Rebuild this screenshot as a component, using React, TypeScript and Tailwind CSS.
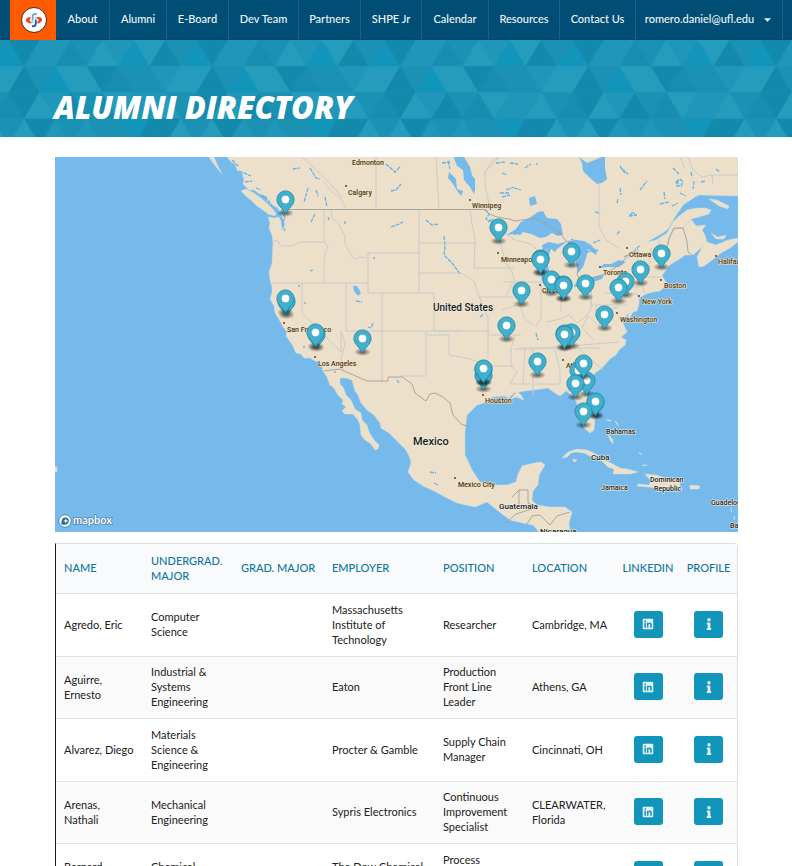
import { FaCaretDown, FaInfo, FaLinkedin } from "react-icons/fa";

const NAV = [
  { label: "About", width: "w-[54px]" },
  { label: "Alumni", width: "w-[57px]" },
  { label: "E-Board", width: "w-[62px]" },
  { label: "Dev Team", width: "w-[70px]" },
  { label: "Partners", width: "w-[62px]" },
  { label: "SHPE Jr", width: "w-[61px]" },
  { label: "Calendar", width: "w-[67px]" },
  { label: "Resources", width: "w-[71px]" },
  { label: "Contact Us", width: "w-[76px]" },
];

const SHADES: Record<string, string> = {
  B: "#1295bb",
  D: "#1389ab",
  K: "#188db0",
  M: "#1b91b4",
  m: "#2096b8",
  L: "#269cbd",
};

/* Each row holds one 188px period, left to right; the first triangle is centred on x = 0. */
const TRIANGLE_ROWS = [
  { first: "up", tones: "BDmmKMLmBLDM" },
  { first: "down", tones: "LDMBLLDKMMmL" },
  { first: "up", tones: "KDLmDMKLmmLM" },
  { first: "down", tones: "MLDmMmMMBDDL" },
];

function TrianglePattern() {
  return (
    <svg className="absolute inset-0 h-full w-full" aria-hidden="true">
      <defs>
        <pattern id="triangles" x="8.5" y="0" width="188" height="104.8" patternUnits="userSpaceOnUse">
          <rect width="188" height="104.8" fill="#1b91b4" />
          {TRIANGLE_ROWS.map((row, r) =>
            [...row.tones, row.tones[0]].map((tone, i) => {
              const cx = i * 15.667;
              const up = (i % 2 === 0) === (row.first === "up");
              const apex = up ? r * 26.2 : (r + 1) * 26.2;
              const base = up ? (r + 1) * 26.2 : r * 26.2;
              return (
                <polygon
                  key={`${r}-${i}`}
                  points={`${cx},${apex} ${cx - 15.667},${base} ${cx + 15.667},${base}`}
                  fill={SHADES[tone]}
                />
              );
            })
          )}
        </pattern>
      </defs>
      <rect width="100%" height="100%" fill="url(#triangles)" />
    </svg>
  );
}

function ShpeLogo() {
  return (
    <svg viewBox="0 0 26 26" className="size-[26px]" aria-hidden="true">
      <circle cx="13" cy="13" r="12.5" fill="#fff" stroke="#3b2a2a" strokeWidth="1" />
      <path d="M9.500 10C6 10.500 4.300 12.300 5 14C5.700 15.600 8 16.500 10.500 16.500L10.500 15C8.500 14.500 8 12.500 9.500 11.800Z" fill="#e8452c" />
      <path d="M16.500 9.700C20 10 21.700 11.500 21 13.300C20.300 15.300 18.500 16.300 16.300 16.500V14.800C18.300 14 18.300 12 15.500 11.500Z" fill="#e8452c" />
      <path d="M15.800 6.300C12.500 5.500 10.700 7 10.700 9.500V13.500H12.600V9.800C12.600 8.300 13.800 7.800 15.800 8.300Z" fill="#74a9c9" />
      <path d="M15.800 12.500V16.500C15.800 19.300 14 20.800 11 20V18.200C12.800 18.600 13.900 17.700 13.900 16.300V12.500Z" fill="#1769a0" />
      <path d="M13.900 12.500V10H15.800V12.500ZM10.700 13.500H12.600V16H10.700Z" fill="#b9cfdb" />
    </svg>
  );
}

const MAINLAND =
  "M227 157L231 162L235 164L237 170L242 173L244 180L243 184L249 190L254 190L258 193L264 196L267 201L272 205L278 208L280 212L283 219L285 224L282 230L281 221L279 217L274 218L268 217L270 223L269 228L272 235L273 243L272 263L269 272L270 280L272 287L272 293L270 299L274 306L275 313L280 321L283 327L287 332L286 336L293 346L296 353L301 354L304 358L310 358L315 361L319 362L322 367L323 371L327 377L330 385L334 388L338 395L343 400L342 404L346 407L342 411L345 414L353 414L358 420L360 425L361 435L365 440L371 444L375 450L378 449L379 445L374 440L369 432L367 425L362 420L361 413L355 409L351 400L346 395L343 387L340 384L340 378L346 378L352 380L355 391L358 395L361 403L367 410L374 415L380 423L381 428L389 433L397 441L406 450L410 458L411 463L408 472L414 480L423 486L434 491L445 497L457 503L475 507L482 504L487 502L497 510L510 520L523 523L533 525L539 532H570L569 523L572 512L565 507L550 507L537 505L532 500L533 491L536 487L538 485L539 475L545 465L541 462L534 463L522 466L518 474L516 482L507 485L493 485L480 482L472 470L467 459L465 455L465 431L467 415L477 405L484 403L493 397L504 396L511 399L516 397L524 400L521 395L518 392L526 391L533 390L541 389L548 388L555 393L560 396L566 391L572 395L577 403L577 412L580 421L585 429L590 433L594 430L595 417L591 407L588 400L587 385L593 375L602 368L610 359L616 355L619 350L625 345L626 340L621 337L627 332L623 323L628 313L629 319L633 312L637 311L639 304L639 298L646 294L653 292L660 291L666 286L666 282L662 276L665 271L671 264L678 260L685 255L693 255L700 249L703 246L697 257L699 267L704 266L711 261L721 253L730 248L738 242V238L728 240L716 245L707 242L705 235L702 230L706 225L696 226L691 219L699 217L709 214L711 210L705 208L697 208L687 210L679 216L673 222L667 233L656 240L647 242L663 233L668 229L675 217L683 205L695 197L699 195L738 196V157Z";

const LAKES = [
  "M508 234L516 229L521 222L531 217L538 212L543 211L547 218L557 219L561 224L563 235L558 236L552 233L546 237L540 238L531 234L523 232L520 235L514 234L506 235Z",
  "M541 275L540 263L542 254L547 249L549 247L543 252L542 245L549 242L558 244L568 241L561 246L557 249L555 252L551 249L547 260L549 270L547 278L542 281Z",
  "M567 241L577 240L584 241L591 245L597 251L596 255L588 249L586 258L583 267L578 273L576 264L574 252L570 248Z",
  "M575 284L582 279L593 277L604 275L602 279L590 283L580 287L574 287Z",
  "M599 268L604 264L611 264L619 260L626 262L619 267L608 267Z",
  "M579 157L587 163L602 157H605V168L607 179L602 183L597 184L588 176L583 171L582 163Z",
  "M454 157H464L470 167L472 175L475 179V190L474 194L470 187L464 180L463 170L457 166L454 158Z",
  "M442 165L451 174L456 179L457 189L463 191L461 196L458 192L453 184L448 178L449 172Z",
  "M529 198L535 196L537 204L530 206Z",
  "M353 286L357 286L361 293L358 296L354 291Z",
];

const RIVULETS =
  "M281 210l4 8 -3 5 3 8M279 213l6 0M265 196l8 11M262 195l5 5M232 160l7 7M239 171l12 5M245 182l7 -1M256 188l5 2M310 168l6 10 4 1M293 169l7 -1M308 188l-4 14M316 190l2 6M325 197l2 10M386 164l9 8 5 -5M391 191l5 -1 5 -6M391 227l8 -3 4 -2M426 220l6 5 7 -1M315 214l-4 8M329 220l-1 -3M345 221v3M444 236l1 11 -1 8 8 8 8 11M356 301l6 1M373 323l-2 5M368 327l3 1M480 317l4 -3M305 347l-2 0M310 271l3 -1M373 258h2M299 285v2M305 302v2M496 163l9 -1M502 173l5 2M510 163l8 1M537 163v2M500 193l10 0M506 190l8 -3M525 168l6 -4M620 166l5 7M622 169l6 5M640 190l7 -9 M660 204l9 -2M672 206l6 -3M677 180l2 5M673 168l6 6M691 172l1 5M629 216l8 -1M617 203l1 -4M595 212l5 1M593 243l7 -3M586 252l12 -2M617 234l3 -3M640 246l-5 3M500 229l-3 -2M488 222l4 -3 5 5M514 235l6 -10M571 239l5 2M570 265l5 -2M536 333l2 7M538 361l-1 7M430 472l6 1M434 483l4 2M397 380l2 3M335 371v2M481 382l2 4M510 398l5 -5M514 188l7 2M716 169l4 3M701 182l5 -1M680 193l6 3M664 192l1 7M694 181l-1 8M620 188l1 7M624 257l14 -8M442 163l8 -1M448 161l2 8M485 209l4 5 -3 5 6 3M502 197l8 -2M676 182l4 -3 3 3 -2 4 -4 0ZM630 215l3 -3 3 4";

const BORDERS =
  "M272 240L278 241L281 246L291 246L301 242H324M324 209V241L328 247L325 253L324 264V283M331 209L332 218L338 223L345 236L345 244L349 251L354 259L362 257L367 258M368 252V293M272 283H368M302 283V313L341 352V331M346 283V331H460M341 331L345 343L343 352L341 358L343 370M382 293V382M368 293H434M419 209V293M368 253H419M419 243H475M419 273H461L474 281L479 296L488 318M434 293V331M426 332V376H400M449 335H427M449 335V355L460 357L470 359L489 366M470 210L472 224L475 240L474 268M474 268H514M479 297H513M488 318V358M434 331H489M489 335H521M489 366H515M489 366V373L491 384M515 335L511 349L511 366L517 372L510 384H531M495 230L501 244L505 262L512 272L515 282L514 293L520 305L524 318L533 325M503 282H540M541 282V318L536 326M561 283V312M561 288H573M591 288V310L585 317L577 323L569 315L560 319L546 322M591 305H627M596 305V317L602 307M594 340L582 328L588 316L599 326L605 310L619 307M514 349H532L619 342M519 348H600M525 349L523 384M533 350V396M555 349L560 371V384M535 384H560M566 390H582M579 349L603 370M591 285V305M638 250V273L645 293M651 248L649 270M645 277H661M638 288L630 286M604 293L637 294L640 300M659 240L661 262L665 269M506 234L515 240L531 244L539 252M513 282L505 297M502 310L516 305M376 157V209M324 182L332 192L342 200L346 209M302 157L322 175L342 197M436 157L439 209M484 175V174L493 160L500 157M490 208L485 185V172L498 158M599 182V226L606 240L619 248M688 157L693 170L702 177L712 175L713 184M680 157L685 169M712 175H738M667 244L674 229L683 228L691 220";

const NATIONAL =
  "M285 209.500H485L489 214L497 217L509 219L515 221L535 218L544 223L560 233L566 241L575 244L580 260L577 274L580 281L602 275M602 275L618 266L629 255M664 254L668 244L669 238L674 228L683 228L687 241L688 252L693 256M324 371L340 369L367 381H388V377H402L412 384L415 393L426 401L430 394L435 393L443 397L450 403L453 415L461 424L470 427M512 497L519 490H528M528 490V503L534 506M519 505V490M506 523L516 514L532 509M527 524L532 516L540 515L550 525L557 516L570 512";

type MapLabel = { text: string; x: number; y: number; size: number; country?: boolean; dot?: [number, number] };

const LABELS: MapLabel[] = [
  { text: "Edmonton", x: 352, y: 165, size: 7 },
  { text: "Calgary", x: 348, y: 195, size: 7, dot: [346, 186] },
  { text: "Winnipeg", x: 472, y: 208, size: 7, dot: [470, 200] },
  { text: "Minneapolis", x: 501, y: 262, size: 7, dot: [498, 253] },
  { text: "Chicago", x: 542, y: 293, size: 7, dot: [540, 285] },
  { text: "Ottawa", x: 629, y: 257, size: 7, dot: [627, 248] },
  { text: "Toronto", x: 603, y: 275, size: 7, dot: [600, 267] },
  { text: "Boston", x: 664, y: 288, size: 7, dot: [661, 280] },
  { text: "New York", x: 642, y: 304, size: 7, dot: [639, 296] },
  { text: "Washington", x: 620, y: 322, size: 7, dot: [617, 313] },
  { text: "Halifax", x: 718, y: 264, size: 7, dot: [716, 256] },
  { text: "San Francisco", x: 287, y: 332, size: 7, dot: [284, 323] },
  { text: "Los Angeles", x: 318, y: 366, size: 7, dot: [315, 357] },
  { text: "Atlanta", x: 566, y: 368, size: 7, dot: [563, 360] },
  { text: "Houston", x: 485, y: 403, size: 7, dot: [483, 395] },
  { text: "Mexico City", x: 458, y: 487, size: 7, dot: [455, 478] },
  { text: "United States", x: 433, y: 311, size: 10, country: true },
  { text: "Mexico", x: 413, y: 445, size: 11, country: true },
  { text: "Cuba", x: 591, y: 460, size: 8, country: true },
  { text: "Bahamas", x: 606, y: 434, size: 7, country: true },
  { text: "Jamaica", x: 601, y: 490, size: 7, country: true },
  { text: "Dominican", x: 650, y: 482, size: 7, country: true },
  { text: "Republic", x: 654, y: 491, size: 7, country: true },
  { text: "Guatemala", x: 499, y: 509, size: 8, country: true },
  { text: "Nicaragua", x: 540, y: 534, size: 8, country: true },
  { text: "Guadeloupe", x: 711, y: 505, size: 7, country: true },
  { text: "Barbados", x: 730, y: 528, size: 7, country: true },
];

const PINS: [number, number][] = [
  [285, 199], [498, 227], [571, 251], [661, 253], [540, 258], [540, 259], [640, 269], [625, 281], [551, 279],
  [585, 283], [563, 284], [563, 285], [618, 287], [521, 290], [286, 301], [285, 298], [604, 314], [506, 325],
  [571, 332], [316, 334], [315, 332], [564, 333], [564, 334], [362, 338], [537, 361], [483, 375], [483, 369],
  [483, 368], [586, 380], [578, 370], [583, 363], [575, 383], [595, 402], [595, 401], [583, 411],
];

function AlumniMap() {
  return (
    <svg
      viewBox="55 157 683 375"
      className="block w-full bg-[#76baec]"
      role="img"
      aria-label="Map of alumni locations"
      fontFamily="Roboto, sans-serif"
    >
      <g fill="#ece0ca" stroke="#c9dfe6" strokeWidth="0.5" strokeLinejoin="round">
        <path d={MAINLAND} />
        <path d="M209 157L214 164L217 168L222 174L217 164L214 157Z" />
        <path d="M241 191L246 189L254 193L262 199L270 206L276 213L275 216L268 214L263 210L257 206L252 201L247 197Z" />
        <path d="M709 199L717 200L729 206L728 209L719 206Z" />
        <path d="M711 233L718 237L726 235L724 239L716 239Z" />
        <path d="M562 458L568 452L577 449L587 450L596 454L604 460L611 463L620 468L627 469L638 472L630 474L613 474L614 469L608 467L601 460L592 457L584 453L576 452L571 453L567 457Z" />
        <path d="M573 459L577 460L575 462L573 461Z" />
        <path d="M645 474L656 475L668 479L680 483L680 487L671 488L662 491L657 488L647 487L637 486L638 484L649 485L651 481Z" />
        <path d="M690 485L700 486L699 489L690 489Z" />
        <path d="M616 486L627 487L622 489Z" />
        <path d="M608 434L613 440L613 444L610 440ZM606 420L611 420V421ZM615 421L618 426V424ZM642 465L647 465L643 466ZM639 452l3 3 -2 -1ZM731 508l1 4 -1 0ZM734 516l1 3 -1 0ZM55 467h2v5h-2Z" />
      </g>
      <g fill="#76baec">
        {LAKES.map((d) => (
          <path key={d} d={d} />
        ))}
      </g>
      <path d={RIVULETS} fill="none" stroke="#62b2e9" strokeWidth="1.3" strokeDasharray="4 1" />
      <path d={BORDERS} fill="none" stroke="#c6c8ca" strokeWidth="0.9" strokeLinejoin="round" />
      <path d={NATIONAL} fill="none" stroke="#a59f96" strokeWidth="0.9" strokeLinejoin="round" />

      {LABELS.map((l) => (
        <g key={l.text}>
          {l.dot && <circle cx={l.dot[0]} cy={l.dot[1]} r="0.9" fill="#4a2c1c" />}
          <text
            x={l.x}
            y={l.y}
            fontSize={l.size}
            fontWeight={500}
            fill={l.country ? "#141b24" : "#4a3618"}
            stroke={l.country ? "#f3eee3" : "#f1e4c4"}
            strokeWidth="1.2"
            strokeLinejoin="round"
            paintOrder="stroke"
          >
            {l.text}
          </text>
        </g>
      ))}

      <defs>
        <radialGradient id="pin-shadow">
          <stop offset="0" stopColor="#111" stopOpacity="0.7" />
          <stop offset="1" stopColor="#111" stopOpacity="0" />
        </radialGradient>
      </defs>
      {PINS.map(([x, y]) => (
        <g key={`${x}-${y}`} transform={`translate(${x + 0.5} ${y + 0.5})`}>
          <ellipse cx="0" cy="13.500" rx="8.500" ry="4" fill="url(#pin-shadow)" />
          <path
            d="M0 14.300C-2.200 9.300 -8.600 5.800 -8.600 0A8.600 8.600 0 1 1 8.600 0C8.600 5.800 2.200 9.300 0 14.300Z"
            fill="#3fb1ce"
            stroke="#258aa4"
            strokeWidth="0.9"
          />
          <circle r="4.200" fill="#fff" stroke="#318fa8" strokeWidth="0.5" />
        </g>
      ))}

      <g>
        <circle cx="65" cy="521" r="6.200" fill="#fff" stroke="#35719b" strokeWidth="0.8" />
        <path d="M61.500 524.500C61 519 63 517.300 66 517.500C69 517.700 69.500 521.500 68 523.300C66.500 525 64 525 61.500 524.500Z" fill="#256b99" />
        <path d="M65.800 518.500L66.600 520.200L68.300 521L66.600 521.800L65.800 523.500L65 521.800L63.300 521L65 520.200Z" fill="#fff" />
        <text
          x="73"
          y="524"
          fontFamily="Lato, sans-serif"
          fontSize="11"
          fontWeight="700"
          fill="#fff"
          stroke="#35719b"
          strokeWidth="1.2"
          paintOrder="stroke"
        >
          mapbox
        </text>
      </g>
    </svg>
  );
}

const COLUMNS = [
  { title: "Name", width: "w-[87px]", pad: "px-2" },
  { title: "Undergrad. Major", width: "w-[90px]", pad: "px-2" },
  { title: "Grad. Major", width: "w-[91px]", pad: "pl-2" },
  { title: "Employer", width: "w-[111px]", pad: "px-2" },
  { title: "Position", width: "w-[89px]", pad: "px-2" },
  { title: "Location", width: "w-[92px]", pad: "pl-2 pr-1" },
  { title: "LinkedIn", width: "w-[64px]", pad: "text-center" },
  { title: "Profile", width: "w-[57px]", pad: "text-center" },
];

const ALUMNI = [
  ["Agredo, Eric", "Computer Science", "", "Massachusetts Institute of Technology", "Researcher", "Cambridge, MA"],
  ["Aguirre, Ernesto", "Industrial & Systems Engineering", "", "Eaton", "Production Front Line Leader", "Athens, GA"],
  ["Alvarez, Diego", "Materials Science & Engineering", "", "Procter & Gamble", "Supply Chain Manager", "Cincinnati, OH"],
  ["Arenas, Nathali", "Mechanical Engineering", "", "Sypris Electronics", "Continuous Improvement Specialist", "CLEARWATER, Florida"],
  ["Bernard, Alexander", "Chemical Engineering", "", "The Dow Chemical Company", "Process Automation Engineer", "Houston, TX"],
];

const actionButton =
  "inline-flex h-[27px] w-[29px] items-center justify-center rounded-[3px] bg-[#1295bb] align-middle text-[#e7f4f8]";

function AlumniTable() {
  return (
    <table className="w-full table-fixed border-separate border-spacing-0 rounded-tr border-t border-r border-l border-t-[#dddedf] border-r-[#dddedf] border-l-[#1b1c1d] text-[11px] leading-[15px] text-[#212121]">
      <thead>
        <tr className="h-[50px] bg-[#f9fafb] text-left text-[#0d76a3] uppercase">
          {COLUMNS.map((c) => (
            <th
              key={c.title}
              scope="col"
              className={`${c.width} ${c.pad} border-b border-[#e0e1e2] pb-[2px] font-medium`}
            >
              {c.title}
            </th>
          ))}
        </tr>
      </thead>
      <tbody>
        {ALUMNI.map((row) => (
          <tr key={row[0]} className="odd:h-[63px] even:h-[62px] even:bg-[#fafafa]">
            {row.map((cell, i) => (
              <td key={i} className={`${COLUMNS[i].pad} border-b border-[#e3e3e4] pb-[2px]`}>
                {cell}
              </td>
            ))}
            <td className="border-b border-[#e3e3e4] pb-[2px] text-center">
              <a href="#linkedin" aria-label={`LinkedIn page of ${row[0]}`} className={actionButton}>
                <FaLinkedin size={12} />
              </a>
            </td>
            <td className="border-b border-[#e3e3e4] pb-[2px] text-center">
              <button type="button" aria-label={`Profile of ${row[0]}`} className={actionButton}>
                <FaInfo size={12} />
              </button>
            </td>
          </tr>
        ))}
      </tbody>
    </table>
  );
}

export default function App() {
  return (
    <div className="h-screen overflow-x-hidden overflow-y-auto bg-white font-[Lato,sans-serif] [scrollbar-width:none]">
      <nav className="flex h-10 border-b border-[#04466b] bg-[#004e75] pl-[10px] text-[11px] font-medium whitespace-nowrap text-[#f2f6f8]">
        <a href="#home" aria-label="Home" className="flex h-10 w-[46px] shrink-0 items-center justify-center bg-[#ff5a00] pl-[2px]">
          <ShpeLogo />
        </a>
        {NAV.map((item) => (
          <a
            key={item.label}
            href="#"
            className={`${item.width} flex shrink-0 items-center justify-center border-r border-[#1c6286]`}
          >
            {item.label}
          </a>
        ))}
        <button
          type="button"
          className="flex w-[147px] shrink-0 items-center justify-center gap-2 border-r border-[#1c6286]"
        >
          romero.daniel@ufl.edu
          <FaCaretDown size={11} />
        </button>
      </nav>

      <header className="relative flex h-[97px] items-end bg-[#1b91b4] px-[54px] pb-[9px]">
        <TrianglePattern />
        <h1 className="relative font-['Open_Sans',sans-serif] text-[31px] leading-[42px] font-extrabold text-white uppercase italic">
          Alumni Directory
        </h1>
      </header>

      <main className="flex flex-col gap-[11px] pt-5 pr-[54px] pl-[55px]">
        <AlumniMap />
        <AlumniTable />
      </main>
    </div>
  );
}
